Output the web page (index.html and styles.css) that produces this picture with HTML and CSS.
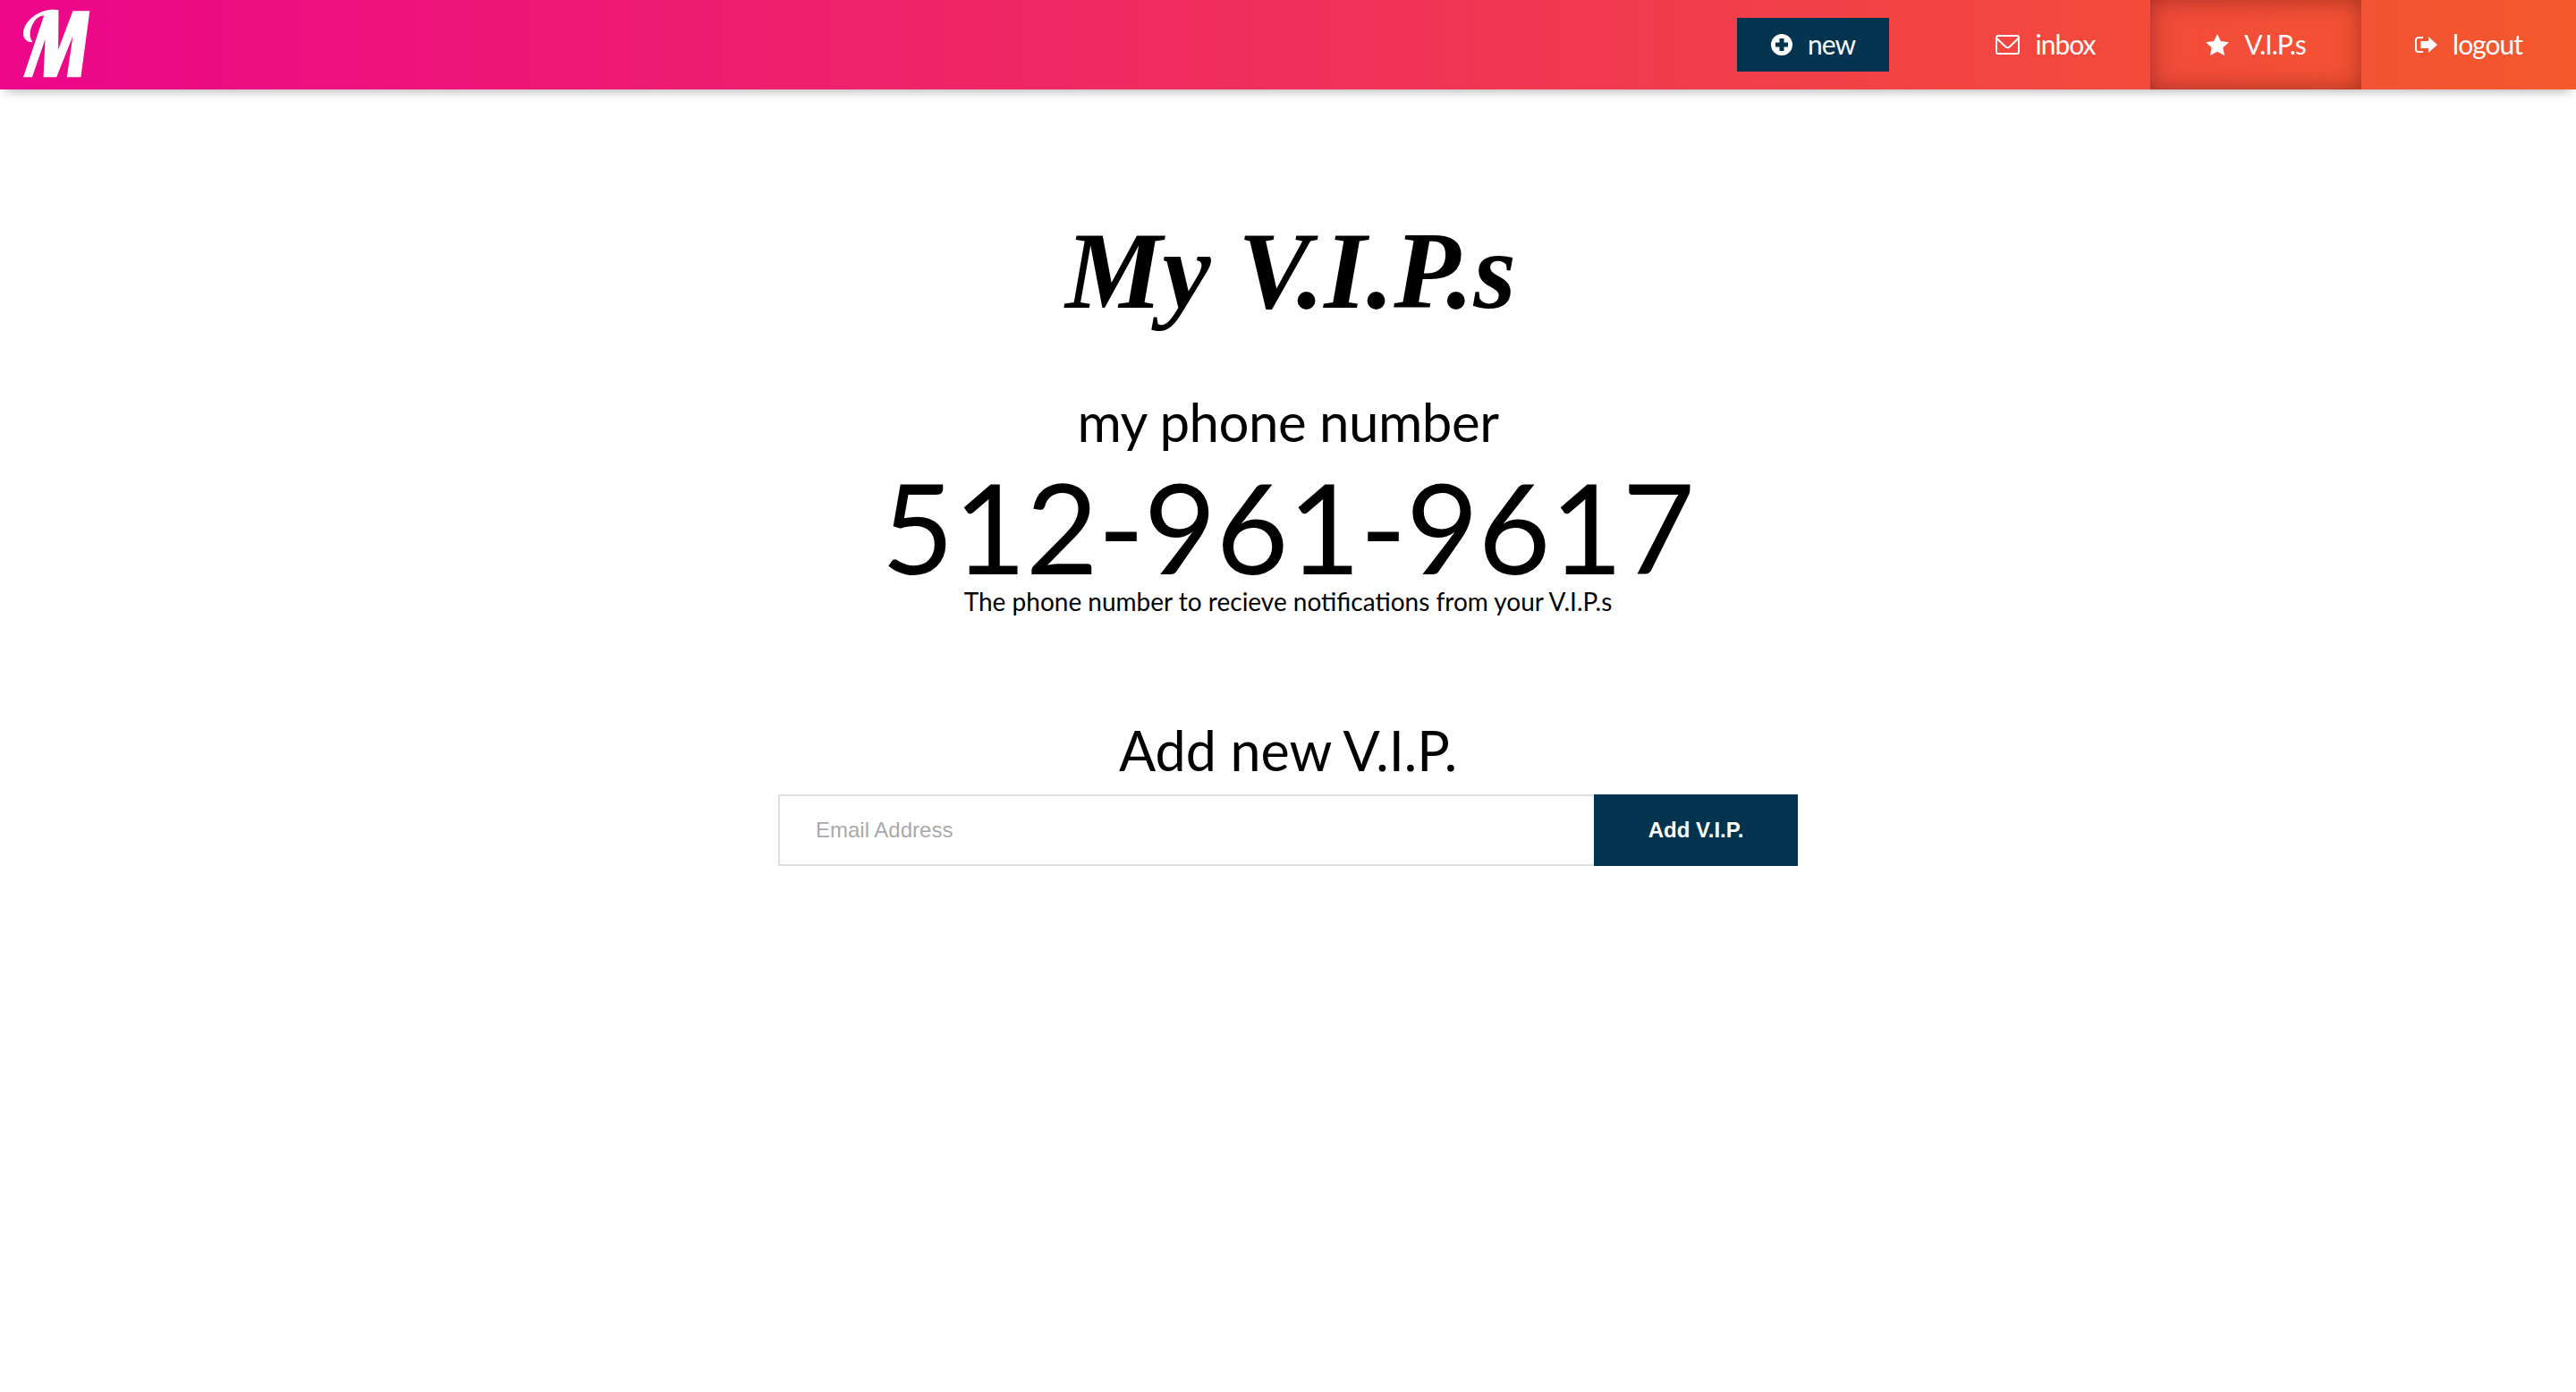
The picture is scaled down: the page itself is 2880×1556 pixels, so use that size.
FILE: index.html
```html
<!DOCTYPE html>
<html lang="en">
<head>
<meta charset="utf-8">
<title>My V.I.P.s</title>
<link rel="stylesheet" href="styles.css">
</head>
<body>
<header class="topbar">
  <a class="logo" href="#" aria-label="Home">
    <svg class="logo-mark" viewBox="78 28 226 232"><path d="M78 258H108L152 130L146 258H190L245 120L225 258H272L302 35H245L196 165L197 32C188 30 178 30 170 30C120 35 78 75 78 110C78 132 95 141 110 140C98 125 96 100 115 70C122 60 132 52 148 50Z"/></svg>
  </a>
  <nav class="nav">
    <a class="new-btn" href="#">
      <svg class="icon" viewBox="0 0 24 24"><path fill-rule="evenodd" d="M12 0a12 12 0 1 0 0 24a12 12 0 0 0 0-24ZM9.500 5h5v4.500H19v5h-4.500V19h-5v-4.500H5v-5h4.500Z"/></svg>
      <span class="nav-label">new</span>
    </a>
    <a class="nav-item" href="#">
      <svg class="icon icon-mail" viewBox="0 0 27 22"><path class="outline" d="M3 1H24A2 2 0 0 1 26 3V19A2 2 0 0 1 24 21H3A2 2 0 0 1 1 19V3A2 2 0 0 1 3 1ZM1.500 4L11.500 13.500Q13.500 15 15.500 13.500L25.500 4"/></svg>
      <span class="nav-label">inbox</span>
    </a>
    <a class="nav-item is-active" href="#">
      <svg class="icon icon-star" viewBox="0 0 26 24"><path d="M13 0L16.900 8.100L26 9.200L19.300 15.200L21.100 24L13 19.700L4.900 24L6.700 15.200L0 9.200L9.100 8.100Z"/></svg>
      <span class="nav-label">V.I.P.s</span>
    </a>
    <a class="nav-item" href="#">
      <svg class="icon icon-exit" viewBox="0 0 25 18"><path d="M9 0H4A4 4 0 0 0 0 4V14A4 4 0 0 0 4 18H9V16H4A2 2 0 0 1 2 14V4A2 2 0 0 1 4 2H9ZM15 0V5H6.500V13H15V18L25 9Z"/></svg>
      <span class="nav-label">logout</span>
    </a>
  </nav>
</header>
<main class="content">
  <h1 class="title">My V.I.P.s</h1>
  <h2 class="phone-label">my phone number</h2>
  <div class="phone-number">512-961-9617</div>
  <p class="phone-note">The phone number to recieve notifications from your V.I.P.s</p>
  <h2 class="add-title">Add new V.I.P.</h2>
  <form class="add-form">
    <input class="add-input" type="email" placeholder="Email Address">
    <button class="add-button" type="button">Add V.I.P.</button>
  </form>
</main>
</body>
</html>
```
FILE: styles.css
```css
* { box-sizing: border-box; }
html, body { margin: 0; padding: 0; }
body {
  background: #fff;
  color: #000;
  font-family: Lato, "Open Sans", sans-serif;
  min-height: 1556px;
}
a { color: inherit; text-decoration: none; }

.topbar {
  height: 100px;
  display: flex;
  align-items: stretch;
  justify-content: space-between;
  padding-left: 26px;
  background: linear-gradient(90deg, #ec068a 0%, #f4592c 100%);
  color: #fff;
  box-shadow: 0 7px 12px -6px rgba(0, 0, 0, .35);
}
.logo { display: flex; align-items: flex-start; padding-top: 10px; }
.logo-mark { width: 75px; height: 77px; fill: #fff; }

.nav { display: flex; align-items: stretch; font-size: 30px; letter-spacing: -1px; }
.nav-label { padding-bottom: 3px; }
.new-btn {
  display: flex;
  align-items: center;
  justify-content: center;
  gap: 17px;
  width: 170px;
  height: 60px;
  margin: 20px 58px 0 0;
  background: #02344f;
}
.nav-item {
  display: flex;
  align-items: center;
  justify-content: center;
  gap: 17px;
  width: 236px;
}
.nav-item:nth-child(2) { width: 234px; }
.nav-item:last-child { width: 240px; }
.is-active {
  box-shadow: inset 0 0 26px rgba(90, 20, 10, .5);
}
.icon { width: 24px; height: 24px; fill: #fff; flex: none; }
.icon-mail { width: 27px; height: 22px; }
.icon-star { width: 26px; height: 24px; }
.icon-exit { width: 25px; height: 18px; }
.outline { fill: none; stroke: #fff; stroke-width: 2; }

.content {
  display: flex;
  flex-direction: column;
  align-items: center;
  text-align: center;
}
.title {
  margin: 124px 0 0;
  padding-left: 6px;
  font: italic 700 122px/1.3 "Liberation Serif", serif;
}
.phone-label { margin: 52px 0 0; font-size: 60px; font-weight: 400; line-height: 72px; letter-spacing: -.5px; }
.phone-number { margin-top: 16px; font-size: 140px; line-height: 130px; letter-spacing: -.6px; }
.phone-note { margin: 1px 0 0; font-size: 28px; line-height: 36px; }
.add-title { margin: 109px 0 0; font-size: 61px; font-weight: 400; line-height: 80px; }
.add-form { display: flex; width: 1140px; height: 80px; margin-top: 9px; }
.add-input {
  flex: 1;
  padding: 0 40px;
  border: 2px solid #e0e0e0;
  border-right: 0;
  background: #fff;
  font: 24px "Liberation Sans", sans-serif;
  outline: none;
}
.add-input::placeholder { color: #aaa; opacity: 1; }
.add-button {
  width: 228px;
  border: 0;
  background: #02344f;
  color: #fff;
  font: 700 24px "Liberation Sans", sans-serif;
}
```
